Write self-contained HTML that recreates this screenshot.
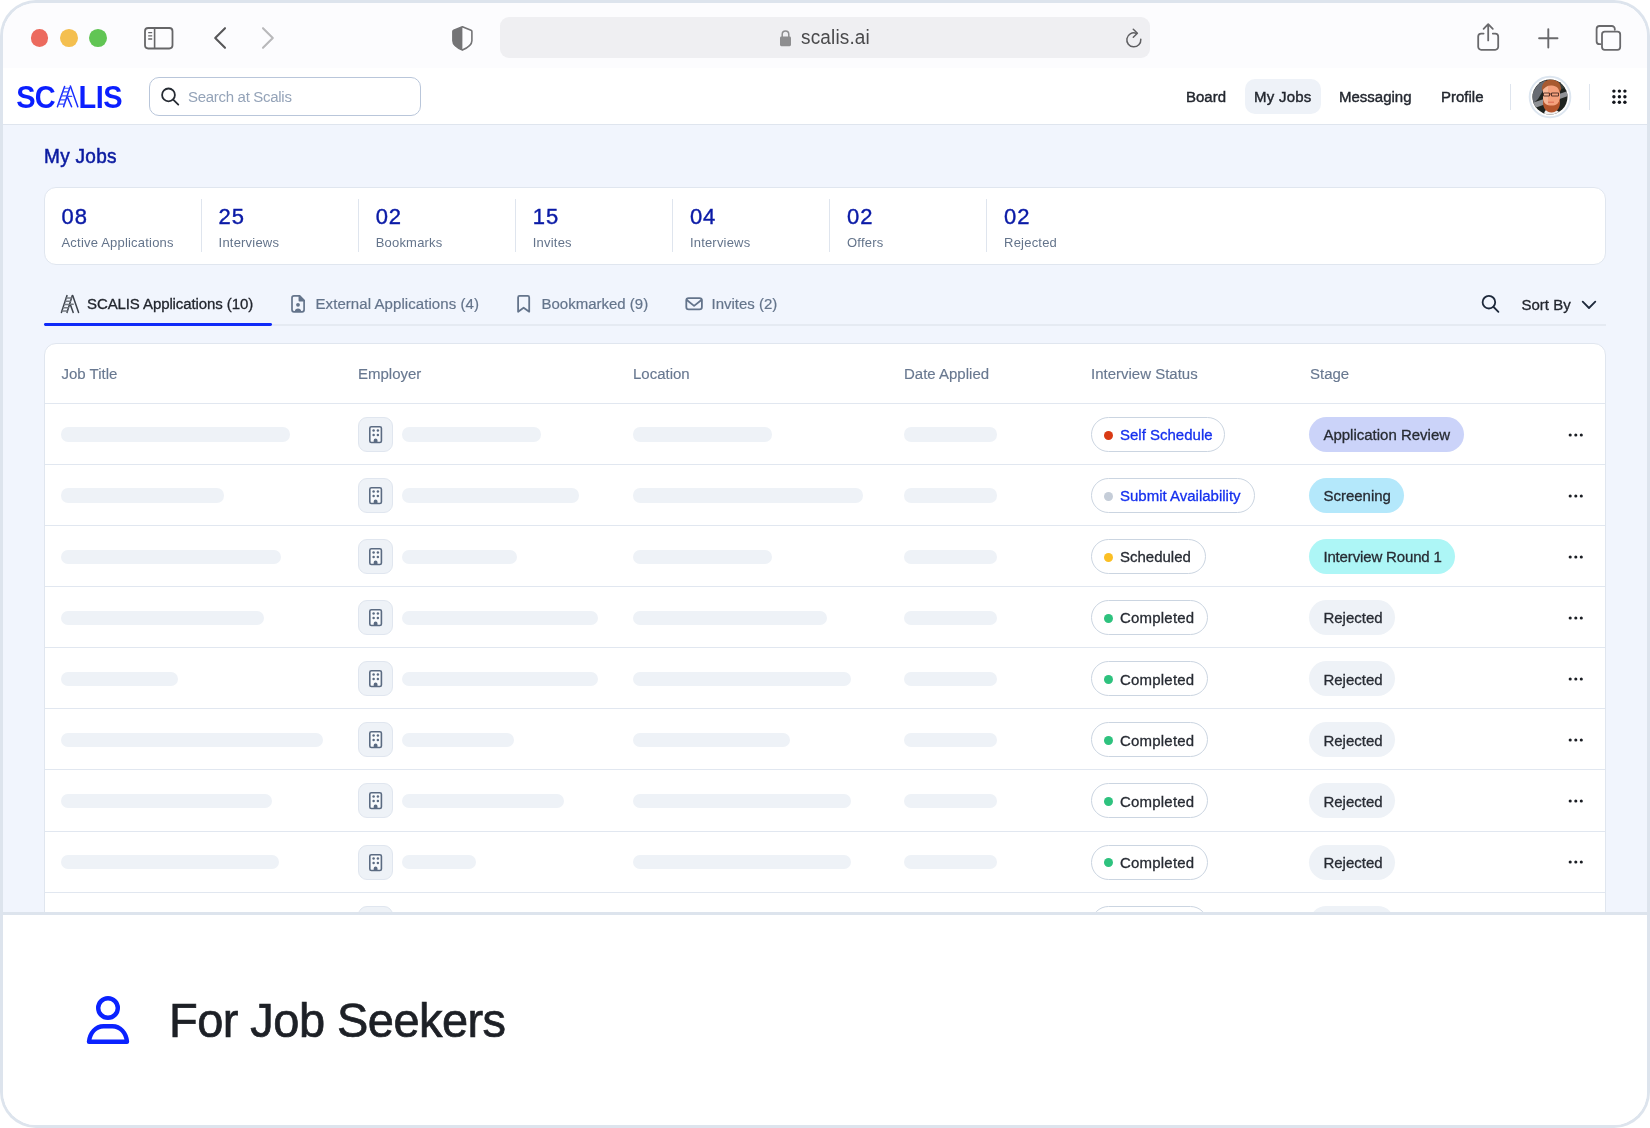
<!DOCTYPE html>
<html lang="en">
<head>
<meta charset="utf-8">
<title>SCALIS - My Jobs</title>
<style>
*{box-sizing:border-box;margin:0;padding:0}
html,body{width:1650px;height:1128px;background:#fff;overflow:hidden}
body{font-family:"Liberation Sans",sans-serif;color:#1e293b;position:relative}
.abs{position:absolute}
.t{position:absolute;white-space:nowrap;line-height:1;transform:scaleY(1.03);transform-origin:0 85%}
#frame{position:absolute;left:0;top:0;width:1650px;height:1128px;border-radius:36px;background:#dde4ed;overflow:hidden;will-change:transform}
#inner{position:absolute;left:3px;top:3px;width:1644px;height:1122px;border-radius:33px;background:#fff;overflow:hidden}
/* coordinates inside #inner are page coords minus 3 -> use wrapper shifted */
#pg{position:absolute;left:-3px;top:-3px;width:1650px;height:1128px}
#chrome{left:0;top:0;width:1650px;height:68px;background:#fcfcfe}
#hdr{left:0;top:68px;width:1650px;height:57px;background:#fff;border-bottom:1px solid #dfe5ee}
#content{left:0;top:125px;width:1650px;height:787px;background:#f1f5fd;overflow:hidden}
#sep{left:0;top:912px;width:1650px;height:3px;background:#dde4ed}
#caption{left:0;top:915px;width:1650px;height:213px;background:#fff}
.dot{position:absolute;width:17.8px;height:17.8px;border-radius:50%;top:28.9px}
#url{left:500px;top:17.3px;width:650px;height:41.2px;border-radius:9px;background:#efeff2}
.nav{font-size:15px;color:#22262e;top:89px;-webkit-text-stroke:0.4px #22262e}

#title{left:44px;top:147px;font-size:19px;color:#0a1aa0;letter-spacing:.3px;-webkit-text-stroke:.5px #0a1aa0}
#stats{left:44px;top:186.5px;width:1562px;height:78px;background:#fff;border:1px solid #e0e6ef;border-radius:12px}
.num{transform:scaleY(1.03);font-size:22px;color:#0a1aa6;top:206px;letter-spacing:.9px;-webkit-text-stroke:.4px #0a1aa6}
.lbl{font-size:13px;color:#64748b;top:236px;letter-spacing:.2px}
.vd{position:absolute;top:199px;width:1px;height:53px;background:#dfe5ee}
.tab{font-size:15px;color:#64748b;top:296px;-webkit-text-stroke:.2px #64748b}
#tabline{left:44px;top:324px;width:1562px;height:1.6px;background:#e5eaf2}
#tabact{left:43.5px;top:323.3px;width:228.4px;height:2.5px;background:#0f2af8;border-radius:1.4px}
#table{left:44px;top:343px;width:1562px;height:600px;background:#fff;border:1px solid #e0e6ef;border-radius:12px}
.th{-webkit-text-stroke:.15px #687890;font-size:15px;color:#687890;top:365.5px}
.hr{position:absolute;left:45px;width:1560px;height:1px;background:#e1e7f0}
.sk{position:absolute;height:14.3px;margin-top:-.1px;border-radius:7.2px;background:#eef2f7}
.ib{position:absolute;left:358px;width:35px;height:35px;border-radius:9px;background:#eef2f7;border:1px solid #e0e6ef}
.sp{position:absolute;left:1091px;height:35px;border-radius:18px;background:#fff;border:1px solid #cbd5e1}
.sp i{position:absolute;left:12px;top:12.5px;width:9px;height:9px;border-radius:50%}
.sp b,.st b{position:absolute;top:9.2px;font-weight:normal;font-size:15px;line-height:1;white-space:nowrap;transform:scaleY(1.03);transform-origin:0 85%}
.sp b{left:28px;color:#272b33;-webkit-text-stroke:.3px #272b33}
.sp.bl b{color:#1530ee;-webkit-text-stroke:.3px #1530ee}
.st{position:absolute;left:1309.4px;height:35px;border-radius:18px;background:#eef2f7}
.st b{left:14px;top:10.2px;color:#272b33;-webkit-text-stroke:.3px #272b33}
.more{position:absolute;left:1566px}
</style>
</head>
<body>
<div id="frame"><div id="inner"><div id="pg">

<!-- Browser chrome -->
<div class="abs" id="chrome">
  <div class="dot" style="left:30.5px;background:#ec6a5e"></div>
  <div class="dot" style="left:59.9px;background:#f4bf4f"></div>
  <div class="dot" style="left:89.1px;background:#61c554"></div>
  <div class="abs" id="url"></div>
  <svg class="abs" style="left:0;top:0" width="1650" height="67" viewBox="0 0 1650 67" fill="none">
    <!-- sidebar -->
    <rect x="145" y="28" width="27.5" height="20.5" rx="3.2" stroke="#666668" stroke-width="1.8"/>
    <path d="M154.6 28v20.5" stroke="#666668" stroke-width="1.6"/>
    <path d="M148.2 32.6h4M148.2 35.8h4M148.2 39h4" stroke="#666668" stroke-width="1.3"/>
    <!-- back / forward -->
    <path d="M225 28.2L215.2 38l9.8 9.8" stroke="#58585a" stroke-width="2.1" stroke-linecap="round" stroke-linejoin="round"/>
    <path d="M263 28.2l9.8 9.8-9.8 9.8" stroke="#b9b9bb" stroke-width="2.1" stroke-linecap="round" stroke-linejoin="round"/>
    <!-- shield -->
    <path d="M462.4 26.7l8.6 3.5c.6.250.9.7.9 1.3v9.3c0 4.4-4 6.9-9.5 9.3-5.5-2.4-9.5-4.9-9.5-9.3v-9.3c0-.6.3-1.050.9-1.3z" stroke="#747476" stroke-width="1.6" stroke-linejoin="round"/>
    <path d="M462.4 26.7l-8.6 3.5c-.6.250-.9.7-.9 1.3v9.3c0 4.4 4 6.9 9.5 9.3z" fill="#747476"/>
    <!-- lock -->
    <rect x="780" y="36.6" width="11" height="9.6" rx="1.4" fill="#8e8e90"/>
    <path d="M782.2 37v-2.6a3.3 3.3 0 0 1 6.6 0V37" stroke="#8e8e90" stroke-width="1.5"/>
    <!-- reload -->
    <path d="M1140.8 39.3A7 7 0 1 1 1136 33.2" stroke="#5e5e61" stroke-width="1.5" stroke-linecap="round"/>
    <path d="M1133.3 29.3l4.1 3.9-4.1 4" stroke="#5e5e61" stroke-width="1.5" stroke-linecap="round" stroke-linejoin="round"/>
    <!-- share -->
    <path d="M1483.6 33.6h-2.4a3 3 0 0 0-3 3v10.2a3 3 0 0 0 3 3h14a3 3 0 0 0 3-3V36.6a3 3 0 0 0-3-3h-2.4" stroke="#69696c" stroke-width="1.8" stroke-linecap="round"/>
    <path d="M1488.2 40.4V24.6M1483.6 28.8l4.6-4.6 4.6 4.6" stroke="#69696c" stroke-width="1.8" stroke-linecap="round" stroke-linejoin="round"/>
    <!-- plus -->
    <path d="M1548.3 29.1v18.4M1539.1 38.3h18.4" stroke="#69696c" stroke-width="1.9" stroke-linecap="round"/>
    <!-- tabs -->
    <path d="M1600.4 44.2h-.8a3 3 0 0 1-3-3V29a3 3 0 0 1 3-3h12.2a3 3 0 0 1 3 3v.8" stroke="#69696c" stroke-width="1.8" stroke-linecap="round"/>
    <rect x="1602" y="31.6" width="18.2" height="18.2" rx="2.8" stroke="#69696c" stroke-width="1.8"/>
  </svg>
  <div class="t" style="left:801px;top:27.7px;font-size:19px;color:#4a4a4c;letter-spacing:.15px">scalis.ai</div>
</div>

<!-- App header -->
<div class="abs" id="hdr"></div>
<!-- logo -->
<div class="t" id="lg1" style="left:16.2px;top:82.7px;font-size:29px;font-weight:bold;color:#0b1fff;letter-spacing:-0.8px;transform:scaleY(1.07);transform-origin:50% 50%">SC</div>
<div class="t" id="lg2" style="left:78.6px;top:82.7px;font-size:29px;font-weight:bold;color:#0b1fff;letter-spacing:-0.6px;transform:scaleY(1.07);transform-origin:50% 50%">LIS</div>
<svg class="abs" style="left:50px;top:80px" width="40" height="32" viewBox="50 80 40 32" fill="none" stroke="#1a2eff" stroke-linecap="round">
  <path d="M64.6 86.5L57.4 106.7M69.9 87.4L63.6 106.7" stroke-width="1.5"/>
  <path d="M70.4 86L77.8 106.7M67.6 97.6L71.6 106.7" stroke-width="1.5"/>
  <path d="M64 88.3h5.6M62.8 91.9h5.6M61.4 95.9h5.8M60 99.9h5.8M58.6 104.1h5.8M68.2 96.4h3.6" stroke-width="1.1" stroke="#3a4cff"/>
</svg>
<!-- search -->
<div class="abs" style="left:149px;top:77px;width:272px;height:39px;border:1px solid #b9c6da;border-radius:10px;background:#fff"></div>
<svg class="abs" style="left:158px;top:86px" width="24" height="22" viewBox="158 86 24 22" fill="none" stroke="#262b33" stroke-width="1.8" stroke-linecap="round">
  <circle cx="168.5" cy="94.9" r="6.4"/><path d="M173.2 99.6l5.1 5"/>
</svg>
<div class="t" id="ph" style="left:188px;top:88.5px;font-size:15px;color:#94a3b8;letter-spacing:-0.3px">Search at Scalis</div>
<!-- nav -->
<div class="abs" style="left:1245px;top:79px;width:76px;height:35px;border-radius:10px;background:#eef2f8"></div>
<div class="t nav" id="n1" style="left:1186px">Board</div>
<div class="t nav" id="n2" style="left:1254px;letter-spacing:.25px">My Jobs</div>
<div class="t nav" id="n3" style="left:1339px">Messaging</div>
<div class="t nav" id="n4" style="left:1441px">Profile</div>
<div class="abs" style="left:1510px;top:84px;width:1px;height:26px;background:#dfe5ee"></div>
<div class="abs" style="left:1589px;top:84px;width:1px;height:26px;background:#dfe5ee"></div>
<!-- avatar -->
<svg class="abs" style="left:1526.6px;top:73.7px" width="46" height="46" viewBox="-23 -23 46 46">
  <defs><clipPath id="avc"><circle cx="0" cy="0" r="17.5"/></clipPath></defs>
  <circle cx="0" cy="0" r="20.3" fill="#fff" stroke="#dde6f0" stroke-width="2"/>
  <g clip-path="url(#avc)">
    <rect x="-18" y="-18" width="36" height="36" fill="#1e2320"/>
    <path d="M-18 -3L-12 -13 -4 -17 -6 -8 -12 2 -18 8z" fill="#676b73"/>
    <path d="M-18 6L18 -6v5L-18 12z" fill="#8f9297"/>
    <path d="M6 -12l6 -4 4 6 -6 3z" fill="#3a3f3c"/>
    <path d="M-6 18c0-4 2-6 6-6s9 1 11 6v2H-6z" fill="#f1efef"/>
    <path d="M-7 -7c0-6 4-9.5 8.5-9.5S10 -13 10 -7v7c0 6-3.5 11-8.5 11S-7 6-7 0z" fill="#f4a07c"/>
    <path d="M-7 -7c0-4 3-7 5-7v18c0 4 1 7 2 7-4 0-7-5-7-11z" fill="#f7b596"/>
    <path d="M-8 -6c-1-7 3-11.5 9.5-11.5 5.5 0 9.5 3.5 9.5 9.5l-1.5 4c-.5-5-3-7-7.5-7.5-4-.5-7.5 1.5-10 5.5z" fill="#a85a30"/>
    <path d="M-7 2c1 5 4 6.5 8.5 6.5S9 7 10 1v5c0 5-3.5 9.5-8.5 9.5S-7 11-7 6z" fill="#b5552b"/>
    <path d="M-2 5.2h6" stroke="#d9604a" stroke-width=".9" fill="none"/>
    <path d="M-6.5 -4h6v3h-6zM1.5 -4h7v3h-7zM-.5 -3h2" fill="none" stroke="#4a2a22" stroke-width=".9"/>
  </g>
</svg>
<!-- grid -->
<svg class="abs" style="left:1610px;top:87px" width="20" height="20" viewBox="1610 87 20 20" fill="#13161c">
  <circle cx="1613.9" cy="91.1" r="1.7"/><circle cx="1619.4" cy="91.1" r="1.7"/><circle cx="1624.9" cy="91.1" r="1.7"/>
  <circle cx="1613.9" cy="96.7" r="1.7"/><circle cx="1619.4" cy="96.7" r="1.7"/><circle cx="1624.9" cy="96.7" r="1.7"/>
  <circle cx="1613.9" cy="102.3" r="1.7"/><circle cx="1619.4" cy="102.3" r="1.7"/><circle cx="1624.9" cy="102.3" r="1.7"/>
</svg>

<!-- Content -->
<div class="abs" id="content"></div>
<div class="abs" id="cwrap" style="left:0;top:0;width:1650px;height:912px;overflow:hidden">
<div class="t" id="title">My Jobs</div>
<div class="abs" id="stats"></div>
<div class="t num" style="left:61.5px">08</div><div class="t lbl" style="left:61.5px">Active Applications</div>
<div class="t num" style="left:218.6px">25</div><div class="t lbl" style="left:218.6px">Interviews</div>
<div class="vd" style="left:200.7px"></div>
<div class="t num" style="left:375.7px">02</div><div class="t lbl" style="left:375.7px">Bookmarks</div>
<div class="vd" style="left:357.8px"></div>
<div class="t num" style="left:532.8px">15</div><div class="t lbl" style="left:532.8px">Invites</div>
<div class="vd" style="left:514.9px"></div>
<div class="t num" style="left:689.9px">04</div><div class="t lbl" style="left:689.9px">Interviews</div>
<div class="vd" style="left:672.0px"></div>
<div class="t num" style="left:847.0px">02</div><div class="t lbl" style="left:847.0px">Offers</div>
<div class="vd" style="left:829.1px"></div>
<div class="t num" style="left:1004.1px">02</div><div class="t lbl" style="left:1004.1px">Rejected</div>
<div class="vd" style="left:986.2px"></div>
<div class="abs" id="tabline"></div><div class="abs" id="tabact"></div>
<svg class="abs" style="left:58px;top:292px" width="24" height="24" viewBox="58 292 24 24" fill="none" stroke="#3c424b" stroke-linecap="round">
  <path d="M67 295.6L61.4 312.4M72.3 295.6L67 312.4" stroke-width="1.5"/>
  <path d="M72.7 295.6L78.6 312.4M70.4 304.8L73.2 312.4" stroke-width="1.5"/>
  <path d="M66.3 298h5.2M65.3 301.2h5M64.2 304.5h5M63.1 307.8h5.2M62 311h5.2M70.6 304.2h2.6" stroke-width="1.5" stroke="#747980"/>
</svg>
<div class="t tab" id="tb1" style="left:87px;color:#22262e;-webkit-text-stroke:.3px #22262e;letter-spacing:-.1px">SCALIS Applications (10)</div>
<svg class="abs" style="left:288px;top:292px" width="20" height="24" viewBox="288 292 20 24" fill="none" stroke="#64748b" stroke-width="1.7" stroke-linejoin="round">
  <path d="M294 295.9h5.4l4.7 4.7v9.2a2 2 0 0 1-2 2H294a2 2 0 0 1-2-2v-11.9a2 2 0 0 1 2-2z"/>
  <path d="M299.4 295.9v4.7h4.7z" fill="#64748b"/>
  <circle cx="298" cy="304.8" r="1.9" fill="#64748b" stroke="none"/>
  <path d="M294.8 311.6c0-2 1.4-3.2 3.2-3.2s3.2 1.2 3.2 3.2z" fill="#64748b" stroke="none"/>
</svg>
<div class="t tab" id="tb2" style="left:315.5px;letter-spacing:.07px">External Applications (4)</div>
<svg class="abs" style="left:514px;top:292px" width="20" height="24" viewBox="514 292 20 24" fill="none" stroke="#64748b" stroke-width="1.8" stroke-linejoin="round">
  <path d="M518.1 311.7V297.4a1.5 1.5 0 0 1 1.5-1.5h8.1a1.5 1.5 0 0 1 1.5 1.5v14.3l-5.6-4z"/>
</svg>
<div class="t tab" id="tb3" style="left:541.5px">Bookmarked (9)</div>
<svg class="abs" style="left:683px;top:294px" width="22" height="20" viewBox="683 294 22 20" fill="none" stroke="#64748b" stroke-width="1.8" stroke-linejoin="round" stroke-linecap="round">
  <rect x="686.3" y="298.1" width="15.6" height="11.3" rx="2.4"/>
  <path d="M686.8 300l7.3 5.9 7.3-5.9"/>
</svg>
<div class="t tab" id="tb4" style="left:711.5px">Invites (2)</div>
<svg class="abs" style="left:1479px;top:292px" width="24" height="24" viewBox="1479 292 24 24" fill="none" stroke="#1e293b" stroke-width="1.8" stroke-linecap="round">
  <circle cx="1488.9" cy="302.2" r="6.3"/><path d="M1493.6 307l4.8 4.8"/>
</svg>
<div class="t tab" id="sortby" style="left:1521.5px;top:296.7px;color:#22262e;-webkit-text-stroke:.3px #22262e">Sort By</div>
<svg class="abs" style="left:1579px;top:298px" width="20" height="14" viewBox="1579 298 20 14" fill="none" stroke="#1e293b" stroke-width="1.8" stroke-linecap="round" stroke-linejoin="round">
  <path d="M1582.7 301.7l6.3 6.3 6.3-6.3"/>
</svg>
<div class="abs" id="table"></div>
<div class="t th" id="th1" style="left:61.5px">Job Title</div>
<div class="t th" id="th2" style="left:358px">Employer</div>
<div class="t th" id="th3" style="left:633px">Location</div>
<div class="t th" id="th4" style="left:904px">Date Applied</div>
<div class="t th" id="th5" style="left:1091px">Interview Status</div>
<div class="t th" id="th6" style="left:1310px">Stage</div>
<div class="hr" style="top:403px"></div>
<div class="sk" style="left:61px;top:427.5px;width:229px"></div>
<div class="ib" style="top:417px"><svg width="33" height="33" viewBox="0 0 33 33" fill="none"><rect x="10.8" y="8.7" width="11.6" height="15.8" rx="1.6" fill="#f8fafc" stroke="#5b6b82" stroke-width="1.6"/><circle cx="14.6" cy="12.6" r="1.25" fill="#5b6b82"/><circle cx="18.9" cy="12.6" r="1.25" fill="#5b6b82"/><circle cx="14.6" cy="16.9" r="1.25" fill="#5b6b82"/><circle cx="18.9" cy="16.9" r="1.25" fill="#5b6b82"/><path d="M14.7 24.5v-2.2a1.9 1.9 0 0 1 3.8 0v2.2z" fill="#5b6b82"/></svg></div>
<div class="sk" style="left:402px;top:427.5px;width:139px"></div>
<div class="sk" style="left:633px;top:427.5px;width:139px"></div>
<div class="sk" style="left:904px;top:427.5px;width:93px"></div>
<div class="sp bl" style="top:417px;width:134px"><i style="background:#d93a14"></i><b>Self Schedule</b></div>
<div class="st" style="top:417px;width:155px;background:#cbd3f9"><b>Application Review</b></div>
<svg class="more" style="top:429.5px" width="20" height="10" viewBox="0 0 20 10" fill="#1b1e24"><circle cx="4.2" cy="5" r="1.55"/><circle cx="9.8" cy="5" r="1.55"/><circle cx="15.3" cy="5" r="1.55"/></svg>
<div class="hr" style="top:464.08px"></div>
<div class="sk" style="left:61px;top:488.58px;width:163px"></div>
<div class="ib" style="top:478.08px"><svg width="33" height="33" viewBox="0 0 33 33" fill="none"><rect x="10.8" y="8.7" width="11.6" height="15.8" rx="1.6" fill="#f8fafc" stroke="#5b6b82" stroke-width="1.6"/><circle cx="14.6" cy="12.6" r="1.25" fill="#5b6b82"/><circle cx="18.9" cy="12.6" r="1.25" fill="#5b6b82"/><circle cx="14.6" cy="16.9" r="1.25" fill="#5b6b82"/><circle cx="18.9" cy="16.9" r="1.25" fill="#5b6b82"/><path d="M14.7 24.5v-2.2a1.9 1.9 0 0 1 3.8 0v2.2z" fill="#5b6b82"/></svg></div>
<div class="sk" style="left:402px;top:488.58px;width:177px"></div>
<div class="sk" style="left:633px;top:488.58px;width:230px"></div>
<div class="sk" style="left:904px;top:488.58px;width:93px"></div>
<div class="sp bl" style="top:478.08px;width:164px"><i style="background:#c5cdd8"></i><b>Submit Availability</b></div>
<div class="st" style="top:478.08px;width:95px;background:#b4e8fb"><b>Screening</b></div>
<svg class="more" style="top:490.58px" width="20" height="10" viewBox="0 0 20 10" fill="#1b1e24"><circle cx="4.2" cy="5" r="1.55"/><circle cx="9.8" cy="5" r="1.55"/><circle cx="15.3" cy="5" r="1.55"/></svg>
<div class="hr" style="top:525.16px"></div>
<div class="sk" style="left:61px;top:549.66px;width:220px"></div>
<div class="ib" style="top:539.16px"><svg width="33" height="33" viewBox="0 0 33 33" fill="none"><rect x="10.8" y="8.7" width="11.6" height="15.8" rx="1.6" fill="#f8fafc" stroke="#5b6b82" stroke-width="1.6"/><circle cx="14.6" cy="12.6" r="1.25" fill="#5b6b82"/><circle cx="18.9" cy="12.6" r="1.25" fill="#5b6b82"/><circle cx="14.6" cy="16.9" r="1.25" fill="#5b6b82"/><circle cx="18.9" cy="16.9" r="1.25" fill="#5b6b82"/><path d="M14.7 24.5v-2.2a1.9 1.9 0 0 1 3.8 0v2.2z" fill="#5b6b82"/></svg></div>
<div class="sk" style="left:402px;top:549.66px;width:115px"></div>
<div class="sk" style="left:633px;top:549.66px;width:139px"></div>
<div class="sk" style="left:904px;top:549.66px;width:93px"></div>
<div class="sp" style="top:539.16px;width:115px"><i style="background:#fbbf24"></i><b>Scheduled</b></div>
<div class="st" style="top:539.16px;width:146px;background:#adf6f6"><b style="letter-spacing:-.15px">Interview Round 1</b></div>
<svg class="more" style="top:551.66px" width="20" height="10" viewBox="0 0 20 10" fill="#1b1e24"><circle cx="4.2" cy="5" r="1.55"/><circle cx="9.8" cy="5" r="1.55"/><circle cx="15.3" cy="5" r="1.55"/></svg>
<div class="hr" style="top:586.24px"></div>
<div class="sk" style="left:61px;top:610.74px;width:203px"></div>
<div class="ib" style="top:600.24px"><svg width="33" height="33" viewBox="0 0 33 33" fill="none"><rect x="10.8" y="8.7" width="11.6" height="15.8" rx="1.6" fill="#f8fafc" stroke="#5b6b82" stroke-width="1.6"/><circle cx="14.6" cy="12.6" r="1.25" fill="#5b6b82"/><circle cx="18.9" cy="12.6" r="1.25" fill="#5b6b82"/><circle cx="14.6" cy="16.9" r="1.25" fill="#5b6b82"/><circle cx="18.9" cy="16.9" r="1.25" fill="#5b6b82"/><path d="M14.7 24.5v-2.2a1.9 1.9 0 0 1 3.8 0v2.2z" fill="#5b6b82"/></svg></div>
<div class="sk" style="left:402px;top:610.74px;width:196px"></div>
<div class="sk" style="left:633px;top:610.74px;width:194px"></div>
<div class="sk" style="left:904px;top:610.74px;width:93px"></div>
<div class="sp" style="top:600.24px;width:117px"><i style="background:#2ec27e"></i><b style="letter-spacing:.2px">Completed</b></div>
<div class="st" style="top:600.24px;width:86px;background:#eef2f7"><b>Rejected</b></div>
<svg class="more" style="top:612.74px" width="20" height="10" viewBox="0 0 20 10" fill="#1b1e24"><circle cx="4.2" cy="5" r="1.55"/><circle cx="9.8" cy="5" r="1.55"/><circle cx="15.3" cy="5" r="1.55"/></svg>
<div class="hr" style="top:647.32px"></div>
<div class="sk" style="left:61px;top:671.82px;width:117px"></div>
<div class="ib" style="top:661.32px"><svg width="33" height="33" viewBox="0 0 33 33" fill="none"><rect x="10.8" y="8.7" width="11.6" height="15.8" rx="1.6" fill="#f8fafc" stroke="#5b6b82" stroke-width="1.6"/><circle cx="14.6" cy="12.6" r="1.25" fill="#5b6b82"/><circle cx="18.9" cy="12.6" r="1.25" fill="#5b6b82"/><circle cx="14.6" cy="16.9" r="1.25" fill="#5b6b82"/><circle cx="18.9" cy="16.9" r="1.25" fill="#5b6b82"/><path d="M14.7 24.5v-2.2a1.9 1.9 0 0 1 3.8 0v2.2z" fill="#5b6b82"/></svg></div>
<div class="sk" style="left:402px;top:671.82px;width:196px"></div>
<div class="sk" style="left:633px;top:671.82px;width:218px"></div>
<div class="sk" style="left:904px;top:671.82px;width:93px"></div>
<div class="sp" style="top:661.32px;width:117px"><i style="background:#2ec27e"></i><b style="letter-spacing:.2px">Completed</b></div>
<div class="st" style="top:661.32px;width:86px;background:#eef2f7"><b>Rejected</b></div>
<svg class="more" style="top:673.82px" width="20" height="10" viewBox="0 0 20 10" fill="#1b1e24"><circle cx="4.2" cy="5" r="1.55"/><circle cx="9.8" cy="5" r="1.55"/><circle cx="15.3" cy="5" r="1.55"/></svg>
<div class="hr" style="top:708.4px"></div>
<div class="sk" style="left:61px;top:732.9px;width:262px"></div>
<div class="ib" style="top:722.4px"><svg width="33" height="33" viewBox="0 0 33 33" fill="none"><rect x="10.8" y="8.7" width="11.6" height="15.8" rx="1.6" fill="#f8fafc" stroke="#5b6b82" stroke-width="1.6"/><circle cx="14.6" cy="12.6" r="1.25" fill="#5b6b82"/><circle cx="18.9" cy="12.6" r="1.25" fill="#5b6b82"/><circle cx="14.6" cy="16.9" r="1.25" fill="#5b6b82"/><circle cx="18.9" cy="16.9" r="1.25" fill="#5b6b82"/><path d="M14.7 24.5v-2.2a1.9 1.9 0 0 1 3.8 0v2.2z" fill="#5b6b82"/></svg></div>
<div class="sk" style="left:402px;top:732.9px;width:112px"></div>
<div class="sk" style="left:633px;top:732.9px;width:157px"></div>
<div class="sk" style="left:904px;top:732.9px;width:93px"></div>
<div class="sp" style="top:722.4px;width:117px"><i style="background:#2ec27e"></i><b style="letter-spacing:.2px">Completed</b></div>
<div class="st" style="top:722.4px;width:86px;background:#eef2f7"><b>Rejected</b></div>
<svg class="more" style="top:734.9px" width="20" height="10" viewBox="0 0 20 10" fill="#1b1e24"><circle cx="4.2" cy="5" r="1.55"/><circle cx="9.8" cy="5" r="1.55"/><circle cx="15.3" cy="5" r="1.55"/></svg>
<div class="hr" style="top:769.48px"></div>
<div class="sk" style="left:61px;top:793.98px;width:211px"></div>
<div class="ib" style="top:783.48px"><svg width="33" height="33" viewBox="0 0 33 33" fill="none"><rect x="10.8" y="8.7" width="11.6" height="15.8" rx="1.6" fill="#f8fafc" stroke="#5b6b82" stroke-width="1.6"/><circle cx="14.6" cy="12.6" r="1.25" fill="#5b6b82"/><circle cx="18.9" cy="12.6" r="1.25" fill="#5b6b82"/><circle cx="14.6" cy="16.9" r="1.25" fill="#5b6b82"/><circle cx="18.9" cy="16.9" r="1.25" fill="#5b6b82"/><path d="M14.7 24.5v-2.2a1.9 1.9 0 0 1 3.8 0v2.2z" fill="#5b6b82"/></svg></div>
<div class="sk" style="left:402px;top:793.98px;width:162px"></div>
<div class="sk" style="left:633px;top:793.98px;width:218px"></div>
<div class="sk" style="left:904px;top:793.98px;width:93px"></div>
<div class="sp" style="top:783.48px;width:117px"><i style="background:#2ec27e"></i><b style="letter-spacing:.2px">Completed</b></div>
<div class="st" style="top:783.48px;width:86px;background:#eef2f7"><b>Rejected</b></div>
<svg class="more" style="top:795.98px" width="20" height="10" viewBox="0 0 20 10" fill="#1b1e24"><circle cx="4.2" cy="5" r="1.55"/><circle cx="9.8" cy="5" r="1.55"/><circle cx="15.3" cy="5" r="1.55"/></svg>
<div class="hr" style="top:830.56px"></div>
<div class="sk" style="left:61px;top:855.06px;width:218px"></div>
<div class="ib" style="top:844.56px"><svg width="33" height="33" viewBox="0 0 33 33" fill="none"><rect x="10.8" y="8.7" width="11.6" height="15.8" rx="1.6" fill="#f8fafc" stroke="#5b6b82" stroke-width="1.6"/><circle cx="14.6" cy="12.6" r="1.25" fill="#5b6b82"/><circle cx="18.9" cy="12.6" r="1.25" fill="#5b6b82"/><circle cx="14.6" cy="16.9" r="1.25" fill="#5b6b82"/><circle cx="18.9" cy="16.9" r="1.25" fill="#5b6b82"/><path d="M14.7 24.5v-2.2a1.9 1.9 0 0 1 3.8 0v2.2z" fill="#5b6b82"/></svg></div>
<div class="sk" style="left:402px;top:855.06px;width:74px"></div>
<div class="sk" style="left:633px;top:855.06px;width:218px"></div>
<div class="sk" style="left:904px;top:855.06px;width:93px"></div>
<div class="sp" style="top:844.56px;width:117px"><i style="background:#2ec27e"></i><b style="letter-spacing:.2px">Completed</b></div>
<div class="st" style="top:844.56px;width:86px;background:#eef2f7"><b>Rejected</b></div>
<svg class="more" style="top:857.06px" width="20" height="10" viewBox="0 0 20 10" fill="#1b1e24"><circle cx="4.2" cy="5" r="1.55"/><circle cx="9.8" cy="5" r="1.55"/><circle cx="15.3" cy="5" r="1.55"/></svg>
<div class="hr" style="top:891.64px"></div>
<div class="sk" style="left:61px;top:916.14px;width:189px"></div>
<div class="ib" style="top:905.64px"><svg width="33" height="33" viewBox="0 0 33 33" fill="none"><rect x="10.8" y="8.7" width="11.6" height="15.8" rx="1.6" fill="#f8fafc" stroke="#5b6b82" stroke-width="1.6"/><circle cx="14.6" cy="12.6" r="1.25" fill="#5b6b82"/><circle cx="18.9" cy="12.6" r="1.25" fill="#5b6b82"/><circle cx="14.6" cy="16.9" r="1.25" fill="#5b6b82"/><circle cx="18.9" cy="16.9" r="1.25" fill="#5b6b82"/><path d="M14.7 24.5v-2.2a1.9 1.9 0 0 1 3.8 0v2.2z" fill="#5b6b82"/></svg></div>
<div class="sk" style="left:402px;top:916.14px;width:118px"></div>
<div class="sk" style="left:633px;top:916.14px;width:167px"></div>
<div class="sk" style="left:904px;top:916.14px;width:93px"></div>
<div class="sp" style="top:905.64px;width:117px"><i style="background:#2ec27e"></i><b style="letter-spacing:.2px">Completed</b></div>
<div class="st" style="top:905.64px;width:86px;background:#eef2f7"><b>Rejected</b></div>
<svg class="more" style="top:918.14px" width="20" height="10" viewBox="0 0 20 10" fill="#1b1e24"><circle cx="4.2" cy="5" r="1.55"/><circle cx="9.8" cy="5" r="1.55"/><circle cx="15.3" cy="5" r="1.55"/></svg>
</div>

<div class="abs" id="sep"></div>
<div class="abs" id="caption"></div>
<svg class="abs" style="left:82px;top:990px" width="52" height="60" viewBox="82 990 52 60" fill="none" stroke="#0a22ff" stroke-width="4.4" stroke-linejoin="round">
  <circle cx="108" cy="1008" r="9.8"/>
  <path d="M89 1041.8c.8-9 6.8-15.6 14.5-15.6h9c7.7 0 13.7 6.6 14.5 15.6z"/>
</svg>
<div class="t" id="captxt" style="left:169px;top:997.3px;transform:scaleY(1.035);font-size:47px;color:#1d2026;letter-spacing:-.55px;-webkit-text-stroke:.7px #1d2026">For Job Seekers</div>

</div></div></div>
</body>
</html>
